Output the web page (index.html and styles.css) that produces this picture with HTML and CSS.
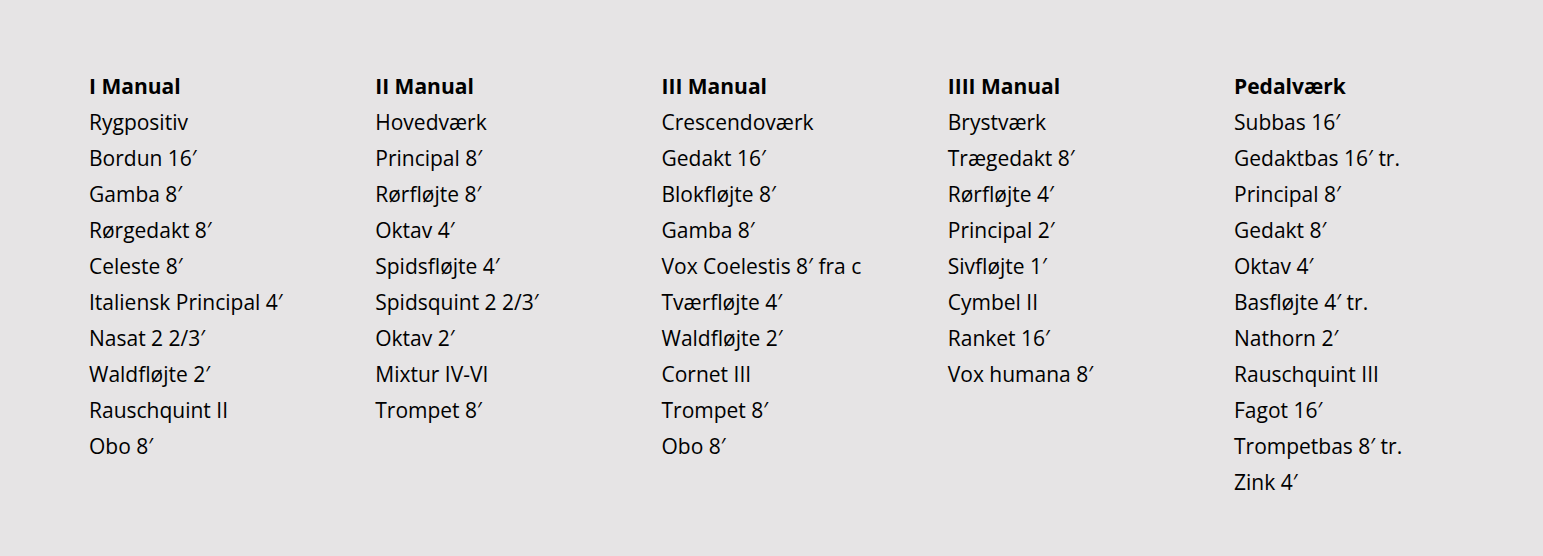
FILE: index.html
```html
<!DOCTYPE html>
<html lang="da">
<head>
<meta charset="utf-8">
<link rel="stylesheet" href="styles.css">
</head>
<body>
<div class="disposition">
  <div class="col">
    <h3 class="title">I Manual</h3>
    <ul class="stops">
      <li>Rygpositiv</li>
      <li>Bordun 16′</li>
      <li>Gamba 8′</li>
      <li>Rørgedakt 8′</li>
      <li>Celeste 8′</li>
      <li>Italiensk Principal 4′</li>
      <li>Nasat 2 2/3′</li>
      <li>Waldfløjte 2′</li>
      <li>Rauschquint II</li>
      <li>Obo 8′</li>
    </ul>
  </div>
  <div class="col">
    <h3 class="title">II Manual</h3>
    <ul class="stops">
      <li>Hovedværk</li>
      <li>Principal 8′</li>
      <li>Rørfløjte 8′</li>
      <li>Oktav 4′</li>
      <li>Spidsfløjte 4′</li>
      <li>Spidsquint 2 2/3′</li>
      <li>Oktav 2′</li>
      <li>Mixtur IV-VI</li>
      <li>Trompet 8′</li>
    </ul>
  </div>
  <div class="col">
    <h3 class="title">III Manual</h3>
    <ul class="stops">
      <li>Crescendoværk</li>
      <li>Gedakt 16′</li>
      <li>Blokfløjte 8′</li>
      <li>Gamba 8′</li>
      <li>Vox Coelestis 8′ fra c</li>
      <li>Tværfløjte 4′</li>
      <li>Waldfløjte 2′</li>
      <li>Cornet III</li>
      <li>Trompet 8′</li>
      <li>Obo 8′</li>
    </ul>
  </div>
  <div class="col">
    <h3 class="title">IIII Manual</h3>
    <ul class="stops">
      <li>Brystværk</li>
      <li>Trægedakt 8′</li>
      <li>Rørfløjte 4′</li>
      <li>Principal 2′</li>
      <li>Sivfløjte 1′</li>
      <li>Cymbel II</li>
      <li>Ranket 16′</li>
      <li>Vox humana 8′</li>
    </ul>
  </div>
  <div class="col">
    <h3 class="title">Pedalværk</h3>
    <ul class="stops">
      <li>Subbas 16′</li>
      <li>Gedaktbas 16′ tr.</li>
      <li>Principal 8′</li>
      <li>Gedakt 8′</li>
      <li>Oktav 4′</li>
      <li>Basfløjte 4′ tr.</li>
      <li>Nathorn 2′</li>
      <li>Rauschquint III</li>
      <li>Fagot 16′</li>
      <li>Trompetbas 8′ tr.</li>
      <li>Zink 4′</li>
    </ul>
  </div>
</div>
</body>
</html>
```

FILE: styles.css
```css
html, body {
  margin: 0;
  padding: 0;
  background: #e6e4e5;
}
body {
  font-family: "Open Sans", "Liberation Sans", sans-serif;
  font-size: 21px;
  line-height: 36px;
  color: #000;
  min-height: 556px;
}
.disposition {
  display: grid;
  grid-template-columns: repeat(5, 286.25px);
  padding: 68px 0 0 89px;
}
.title {
  margin: 0;
  font-size: 21px;
  font-weight: 700;
  line-height: 36px;
}
.stops {
  list-style: none;
  margin: 0;
  padding: 0;
}
.stops li {
  margin: 0;
  white-space: nowrap;
}
```
